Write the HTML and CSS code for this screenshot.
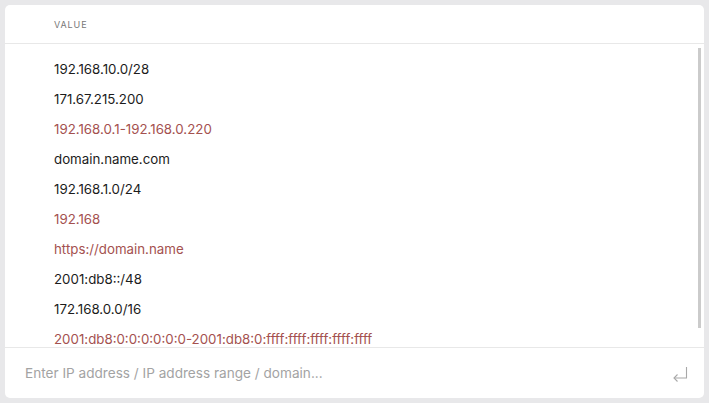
FILE: index.html
```html
<!DOCTYPE html>
<html lang="en">
<head>
    <meta charset="UTF-8">
    <title>Values</title>
    <link rel="stylesheet" href="styles.css">
</head>
<body>
    <!-- Tarjeta de valores -->
    <div class="card">
        <div class="card-header">VALUE</div>

        <div class="list-wrap">
            <div class="value-list">
                <div class="value-row">192.168.10.0/28</div>
                <div class="value-row">171.67.215.200</div>
                <div class="value-row invalid">192.168.0.1-192.168.0.220</div>
                <div class="value-row">domain.name.com</div>
                <div class="value-row">192.168.1.0/24</div>
                <div class="value-row invalid">192.168</div>
                <div class="value-row invalid">https://domain.name</div>
                <div class="value-row">2001:db8::/48</div>
                <div class="value-row">172.168.0.0/16</div>
                <div class="value-row invalid">2001:db8:0:0:0:0:0:0-2001:db8:0:ffff:ffff:ffff:ffff:ffff</div>
            </div>
            <!-- Barra de scroll -->
            <div class="scroll-thumb"></div>
        </div>

        <div class="input-bar">
            <input type="text" placeholder="Enter IP address / IP address range / domain...">
            <svg class="enter-icon" width="16" height="14" viewBox="0 0 16 14">
                <path d="M14.5 1 V12 H2" fill="none" stroke="#a8a8a8" stroke-width="1.1"/>
                <path d="M5.5 8.5 L2 12 L5.5 15.5" fill="none" stroke="#a8a8a8" stroke-width="1.1"/>
            </svg>
        </div>
    </div>
</body>
</html>
```

FILE: styles.css
```css
/* Colores */
:root {
    --page-bg: #e8e8ea;
    --card-bg: #ffffff;
    --line: #e8e8e8;
    --text: #1c1c1c;
    --invalid: #a4514f;
    --muted: #a3a3a3;
}

body {
    margin: 0;
    padding: 5px;
    background-color: var(--page-bg);
    font-family: Inter, "Noto Sans", sans-serif;
    color: var(--text);
}

.card {
    background: var(--card-bg);
    border-radius: 5px;
    height: 393px;
    display: flex;
    flex-direction: column;
    overflow: hidden;
}

/* Cabecera */
.card-header {
    height: 38px;
    flex-shrink: 0;
    border-bottom: 1px solid var(--line);
    padding-left: 49px;
    display: flex;
    align-items: center;
    font-size: 9px;
    letter-spacing: 0.9px;
    color: #777777;
}

/* Lista de valores */
.list-wrap {
    position: relative;
    height: 303px;
    flex-shrink: 0;
}

.value-list {
    height: 100%;
    overflow: hidden;
    padding: 10px 0 0 49px;
    box-sizing: border-box;
}

.scroll-thumb {
    position: absolute;
    top: 4px;
    right: 3px;
    width: 3px;
    height: 280px;
    background-color: #cbcbcb;
}

.value-row {
    height: 30px;
    line-height: 30px;
    font-size: 13.3px;
    white-space: nowrap;
}

.invalid {
    color: var(--invalid);
}

/* Barra de entrada */
.input-bar {
    flex: 1;
    border-top: 1px solid var(--line);
    display: flex;
    align-items: center;
    padding: 0 16px 0 20px;
}

.input-bar input {
    flex: 1;
    border: none;
    outline: none;
    font-family: inherit;
    font-size: 13.6px;
    color: var(--text);
    padding: 0;
}

.input-bar input::placeholder {
    color: var(--muted);
}

.enter-icon {
    flex-shrink: 0;
    overflow: visible;
}
```
